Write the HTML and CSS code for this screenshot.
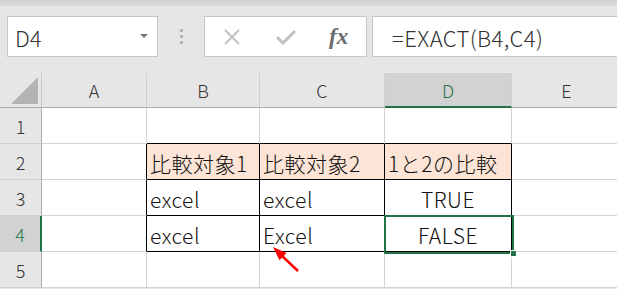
FILE: index.html
```html
<!DOCTYPE html>
<html lang="ja">
<head>
    <meta charset="UTF-8">
    <title>EXACT関数</title>
    <link rel="stylesheet" href="styles.css">
</head>
<body>
    <div class="top-strip"></div>

    <div class="formula-row">
        <div class="name-box">
            <span class="name-text">D4</span>
            <span class="name-arrow"></span>
        </div>
        <div class="grip">
            <span></span><span></span><span></span>
        </div>
        <div class="fx-buttons">
            <svg class="icon-x" width="16" height="16" viewBox="0 0 16 16">
                <path d="M1 1 L15 15 M15 1 L1 15" stroke="#c1c1c1" stroke-width="2" fill="none"/>
            </svg>
            <svg class="icon-check" width="20" height="16" viewBox="0 0 20 16">
                <path d="M1 8 L7 14 L19 2" stroke="#c1c1c1" stroke-width="3" fill="none"/>
            </svg>
            <span class="fx">fx</span>
        </div>
        <div class="formula">=EXACT(B4,C4)</div>
    </div>

    <div class="sheet">
        <div class="grid">
            <!-- header -->
            <div class="corner"><span class="corner-tri"></span></div>
            <div class="col-head">A</div>
            <div class="col-head">B</div>
            <div class="col-head">C</div>
            <div class="col-head active">D</div>
            <div class="col-head">E</div>

            <!-- row 1 -->
            <div class="row-head">1</div>
            <div class="cell"></div>
            <div class="cell edge-b"></div>
            <div class="cell edge-b"></div>
            <div class="cell edge-b"></div>
            <div class="cell"></div>

            <!-- row 2 -->
            <div class="row-head">2</div>
            <div class="cell edge-r"></div>
            <div class="cell tb fill">比較対象1</div>
            <div class="cell tb fill">比較対象2</div>
            <div class="cell tb fill">1と2の比較</div>
            <div class="cell"></div>

            <!-- row 3 -->
            <div class="row-head">3</div>
            <div class="cell edge-r"></div>
            <div class="cell tb">excel</div>
            <div class="cell tb">excel</div>
            <div class="cell tb center">TRUE</div>
            <div class="cell"></div>

            <!-- row 4 -->
            <div class="row-head active">4</div>
            <div class="cell edge-r"></div>
            <div class="cell tb">excel</div>
            <div class="cell tb">Excel</div>
            <div class="cell tb center">FALSE</div>
            <div class="cell"></div>

            <!-- row 5 -->
            <div class="row-head">5</div>
            <div class="cell"></div>
            <div class="cell"></div>
            <div class="cell"></div>
            <div class="cell"></div>
            <div class="cell"></div>
        </div>

        <div class="selection"><span class="handle"></span></div>

        <svg class="pointer" width="40" height="34" viewBox="0 0 40 34">
            <path d="M32 31 L14 14" stroke="#ff0000" stroke-width="2.5" fill="none"/>
            <path d="M7 7 L20.5 13.1 L13.5 20.3 Z" fill="#ff0000"/>
        </svg>
    </div>
</body>
</html>
```

FILE: styles.css
```css
* {
    margin: 0;
    padding: 0;
    box-sizing: border-box;
}

body {
    width: 617px;
    height: 289px;
    overflow: hidden;
    background: #e6e6e6;
    font-family: "Noto Sans CJK JP", "Noto Sans", sans-serif;
    font-weight: 300;
    color: #222;
}

.top-strip {
    height: 6px;
    background: linear-gradient(#d2d2d2, #dcdcdc);
}

.formula-row {
    display: flex;
    align-items: stretch;
    height: 41px;
    margin: 10px 0 16px 7px;
}

.name-box {
    width: 151px;
    background: white;
    border: 1px solid #c6c6c6;
    display: flex;
    align-items: center;
    justify-content: space-between;
    padding: 0 9px 0 7px;
}

.name-text {
    font-size: 22px;
    color: #333;
    line-height: 1;
}

.name-arrow {
    width: 0;
    height: 0;
    border-left: 4px solid transparent;
    border-right: 4px solid transparent;
    border-top: 4px solid #777;
    margin-top: -2px;
}

.grip {
    width: 46px;
    display: flex;
    flex-direction: column;
    align-items: center;
    justify-content: center;
    gap: 3px;
}

.grip span {
    width: 3px;
    height: 3px;
    background: #b3b3b3;
}

.fx-buttons {
    width: 163px;
    background: white;
    border: 1px solid #c6c6c6;
    display: flex;
    align-items: center;
    padding-left: 19px;
}

.icon-check {
    margin-left: 36px;
}

.fx {
    margin-left: 33px;
    font-family: "Liberation Serif", "DejaVu Serif", serif;
    font-style: italic;
    font-weight: bold;
    font-size: 23px;
    color: #6b6b6b;
}

.formula {
    flex: 1;
    margin-left: 5px;
    margin-right: -4px;
    background: white;
    border: 1px solid #c6c6c6;
    font-size: 22px;
    letter-spacing: 0.4px;
    color: #333;
    display: flex;
    align-items: center;
    padding-left: 19px;
}

.sheet {
    position: relative;
}

.grid {
    display: grid;
    grid-template-columns: 42px 105px 113px 125px 127px 110px;
    grid-template-rows: 35px repeat(5, 36px);
}

.corner {
    position: relative;
    background: #e6e6e6;
    border-right: 1px solid #c8c8c8;
    border-bottom: 1px solid #acacac;
}

.corner-tri {
    position: absolute;
    right: 3px;
    bottom: 3px;
    width: 0;
    height: 0;
    border-left: 27px solid transparent;
    border-bottom: 27px solid #b4b4b4;
}

.col-head {
    background: #e6e6e6;
    border-right: 1px solid #cfcfcf;
    border-bottom: 1px solid #acacac;
    display: flex;
    align-items: center;
    justify-content: center;
    font-size: 18px;
    color: #333;
}

.col-head.active {
    background: #d2d2d2;
    border-bottom: 2px solid #217346;
    color: #217346;
}

.row-head {
    background: #e6e6e6;
    border-right: 1px solid #acacac;
    border-bottom: 1px solid #cfcfcf;
    display: flex;
    align-items: center;
    justify-content: center;
    font-size: 18px;
    color: #333;
}

.row-head.active {
    background: #d2d2d2;
    border-right: 2px solid #217346;
    color: #217346;
}

.cell {
    background: white;
    border-right: 1px solid #d4d4d4;
    border-bottom: 1px solid #d4d4d4;
    display: flex;
    align-items: flex-end;
    padding: 0 0 3px 3px;
    font-size: 21px;
    letter-spacing: 0.5px;
    line-height: 1.2;
    color: #111;
    white-space: nowrap;
}

.cell.edge-b {
    border-bottom-color: #000;
}

.cell.edge-r {
    border-right-color: #000;
}

.cell.tb {
    border-right-color: #000;
    border-bottom-color: #000;
}

.cell.fill {
    background: #fce4d6;
}

.cell.center {
    justify-content: center;
    padding-left: 0;
}

.selection {
    position: absolute;
    left: 384px;
    top: 142px;
    width: 130px;
    height: 39px;
    border: 2px solid #217346;
}

.handle {
    position: absolute;
    right: -5px;
    bottom: -5px;
    width: 7px;
    height: 7px;
    background: #217346;
    border: 1px solid white;
}

.pointer {
    position: absolute;
    left: 266px;
    top: 167px;
}
```
